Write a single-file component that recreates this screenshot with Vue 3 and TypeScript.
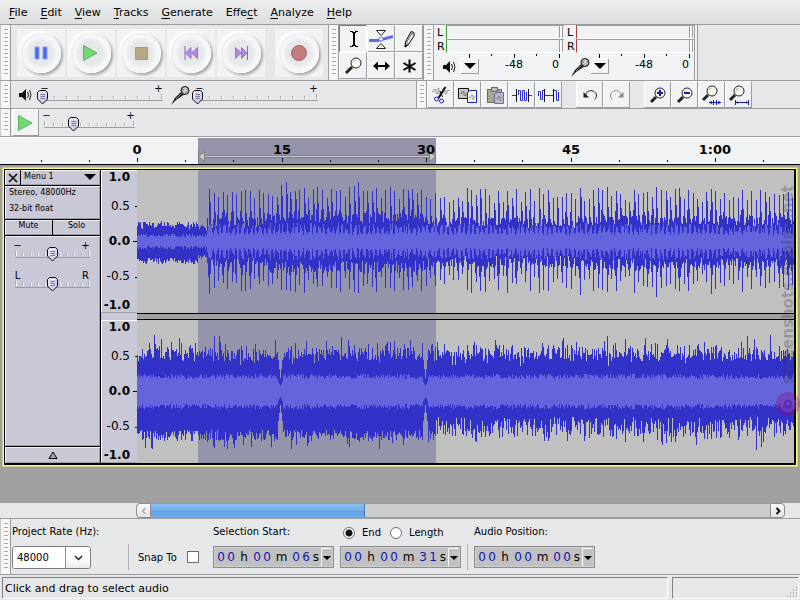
<script setup lang="ts">
import { computed, defineComponent, h, onBeforeUnmount, onMounted, ref } from 'vue'

interface Shape {
  d: string
  fill?: string
  stroke?: string
  w?: number
}

interface Tool {
  name: string
  shapes: Shape[]
}

const Glyph = defineComponent({
  props: { shapes: { type: Array, required: true }, w: { type: Number, default: 24 }, h: { type: Number, default: 24 } },
  setup(props) {
    return () =>
      h(
        'svg',
        { class: 'glyph', width: props.w, height: props.h, viewBox: `0 0 ${props.w} ${props.h}`, 'aria-hidden': 'true' },
        (props.shapes as Shape[]).map((s) =>
          h('path', { d: s.d, fill: s.fill ?? 'none', stroke: s.stroke ?? 'none', 'stroke-width': s.w ?? 1 }),
        ),
      )
  },
})

const Slider = defineComponent({
  props: {
    label: { type: String, required: true },
    low: { type: String, default: '−' },
    high: { type: String, default: '+' },
    length: { type: Number, required: true },
    start: { type: Number, required: true },
  },
  setup(props) {
    const value = ref(props.start)
    return () => {
      const step = (props.length - 2) / 10
      let ticks = ''
      for (let i = 0; i <= 10; i++) {
        const x = Math.round(i * step) + 1
        ticks += `M${x + 0.5} ${i % 10 === 0 ? 12 : 14}V17`
      }
      return h('label', { class: 'slider', style: { width: props.length + 'px' } }, [
        h('svg', { class: 'slider-scale', width: props.length, height: 26, 'aria-hidden': 'true' }, [
          h('path', { d: ticks, stroke: '#ffffff' }),
          h('path', { d: ticks, stroke: '#a8a8ac', transform: 'translate(-1 0)' }),
          h('path', { d: `M0 18.5H${props.length}`, stroke: '#9c9ca0' }),
        ]),
        h('span', { class: 'slider-end' }, props.low),
        h('span', { class: 'slider-end' }, props.high),
        h('svg', { class: 'slider-thumb', style: { left: value.value + '%' }, width: 11, height: 15, 'aria-hidden': 'true' }, [
          h('path', { d: 'M2.5 .5H8.5L10.5 2.5V9L5.5 14L.5 9V2.5Z', fill: '#d2d2ea', stroke: '#111' }),
          h('path', { d: 'M2 9V2.5H8', stroke: '#fff', fill: 'none' }),
          h('path', { d: 'M3.5 4.5H8M3.5 6.5H8M3.5 8.5H8', stroke: '#7c7ca4' }),
        ]),
        h('input', {
          type: 'range', min: 0, max: 100, value: value.value, 'aria-label': props.label,
          onInput: (e: Event) => { value.value = Number((e.target as HTMLInputElement).value) },
        }),
      ])
    }
  },
})

const menus = [
  ['', 'F', 'ile'], ['', 'E', 'dit'], ['', 'V', 'iew'], ['', 'T', 'racks'],
  ['', 'G', 'enerate'], ['Effe', 'c', 't'], ['', 'A', 'nalyze'], ['', 'H', 'elp'],
]

const playShape: Shape[] = [{ d: 'M4.5 4.5L18 12L4.5 19.5Z', fill: '#73d873', stroke: '#58b658' }]

const transport: Tool[] = [
  { name: 'Pause', shapes: [{ d: 'M6 6H10V18H6ZM14 6H18V18H14Z', fill: '#4a68f0', stroke: '#86a0ff' }] },
  { name: 'Play', shapes: playShape },
  { name: 'Stop', shapes: [{ d: 'M6.5 6.5H18.5V18.5H6.5Z', fill: '#b8a888', stroke: '#a89a7c' }] },
  {
    name: 'Skip to Start',
    shapes: [{ d: 'M12 6.5V17.5L6.5 12ZM18.5 6.5V17.5L12.5 12Z', fill: '#b48ae0', stroke: '#9a74cc' }, { d: 'M6 5V19', stroke: '#8b66b8' }],
  },
  {
    name: 'Skip to End',
    shapes: [{ d: 'M6.5 6.5V17.5L12 12ZM12.5 6.5V17.5L18 12Z', fill: '#b48ae0', stroke: '#9a74cc' }, { d: 'M18.5 5V19', stroke: '#8b66b8' }],
  },
  { name: 'Record', shapes: [{ d: 'M4.5 12A7.5 7.5 0 1 0 19.5 12A7.5 7.5 0 1 0 4.5 12Z', fill: '#c47c7c', stroke: '#a86262' }] },
]

const lens = (cx: number, cy: number, tail: string): Shape[] => [
  { d: tail, stroke: '#222', w: 3 },
  { d: `M${cx - 5} ${cy}a5 5 0 1 0 10 0a5 5 0 1 0 -10 0Z`, fill: '#fbfbf0', stroke: '#222' },
  { d: `M${cx - 3} ${cy}a3 3 0 0 1 3 -3`, stroke: '#bbb' },
]

const editTools: Tool[] = [
  {
    name: 'Selection Tool',
    shapes: [{ d: 'M13 5V19', stroke: '#000', w: 2 }, { d: 'M9 4.5H12M14 4.5H17M9 19.5H12M14 19.5H17M11 5.5H15M11 18.5H15', stroke: '#000' }],
  },
  {
    name: 'Envelope Tool',
    shapes: [
      { d: 'M0 13.5H9L24 9.5', stroke: '#6a6ae0', w: 3 },
      { d: 'M7.5 3.5H16.5L12 8.5ZM7.5 21.5H16.5L12 16.5Z', fill: '#fff', stroke: '#222' },
      { d: 'M10 12a2 2 0 1 0 4 0a2 2 0 1 0 -4 0Z', fill: '#fff', stroke: '#7a7ae6' },
    ],
  },
  {
    name: 'Draw Tool',
    shapes: [
      { d: 'M14 4.5L17 5.5V9L11 18L8 20L8.5 15Z', fill: '#fff', stroke: '#000' },
      { d: 'M15 6L10 15M8.5 15L11 17', stroke: '#555' },
      { d: 'M8 17L10.5 18L8 20.5Z', fill: '#000' },
      { d: 'M14 4.5L17 6V9L13.5 7Z', fill: '#888' },
    ],
  },
  { name: 'Zoom Tool', shapes: lens(15, 9, 'M11 13L5 19') },
  { name: 'Time Shift Tool', shapes: [{ d: 'M7 12H18', stroke: '#000', w: 2 }, { d: 'M4 12L9 7.5V16.5ZM21 12L16 7.5V16.5Z', fill: '#000' }] },
  { name: 'Multi Tool', shapes: [{ d: 'M12.5 5.5V18.5M6.5 9L18.5 16M18.5 9L6.5 16', stroke: '#000', w: 2 }] },
]

const clipboard: Tool[] = [
  {
    name: 'Cut',
    shapes: [
      { d: 'M3 8.5H5V6.5H7V10.5H9V5.5H10V11.5M14 6.5V10M16 7V10.5H18V7.5H21', stroke: '#999' },
      { d: 'M16.5 4L9.5 15', stroke: '#111', w: 2 },
      { d: 'M11 8L13.5 14', stroke: '#111' },
      { d: 'M5.5 16a2 2 0 1 0 4 0a2 2 0 1 0 -4 0M10.5 18a2 2 0 1 0 4 0a2 2 0 1 0 -4 0', stroke: '#1a1ab4' },
    ],
  },
  {
    name: 'Copy',
    shapes: [
      { d: 'M2.5 5.5H12.5V15.5H2.5Z', fill: '#c8c8c8', stroke: '#111' },
      { d: 'M4 10.5H6V8.5H8V12.5H10V9.5', stroke: '#777' },
      { d: 'M11.5 9.5L14 7.5H20.5V19.5H11.5Z', fill: '#f5f5fa', stroke: '#1a1ab4' },
      { d: 'M13 14.5H15V12.5H17V16.5H18V13', stroke: '#999' },
    ],
  },
  {
    name: 'Paste',
    shapes: [
      { d: 'M4.5 6.5H18.5V19.5H4.5Z', fill: '#aaa68a', stroke: '#6c6a5c' },
      { d: 'M8.5 4.5H14.5V8.5H8.5Z', fill: '#bcbcbc', stroke: '#666' },
      { d: 'M11.5 11.5L14 9.5H20.5V20.5H11.5Z', fill: '#b8b8cc', stroke: '#6c6ca8' },
      { d: 'M13 15.5H15V13.5H17V17.5H18V14', stroke: '#888' },
    ],
  },
  {
    name: 'Trim Outside Selection',
    shapes: [
      { d: 'M2 12.5H6M19 12.5H22', stroke: '#2a2ad0' },
      { d: 'M8.5 12V7.5H10.5V17.5H12.5V7.5H14.5V17.5H16.5V9', stroke: '#2a2ad0' },
      { d: 'M6.5 6V19M18.5 6V19', stroke: '#111' },
    ],
  },
  {
    name: 'Silence Selection',
    shapes: [
      { d: 'M1.5 13V8.5H3.5V16.5H5.5V7.5H7M17 7.5H19.5V17.5H21.5V9', stroke: '#2a2ad0' },
      { d: 'M8 12.5H16', stroke: '#2a2ad0' },
      { d: 'M7.5 6V19M16.5 6V19', stroke: '#111' },
    ],
  },
]

const history: Tool[] = [
  { name: 'Undo', shapes: [{ d: 'M7.5 12.5A5.5 5 0 1 1 16.5 16.5', stroke: '#222' }, { d: 'M5.5 9V14.5H11Z', fill: '#222' }] },
  { name: 'Redo', shapes: [{ d: 'M16.5 12.5A5.5 5 0 1 0 7.5 16.5', stroke: '#888' }, { d: 'M18.5 9V14.5H13Z', fill: '#888' }] },
]

const zooms: Tool[] = [
  { name: 'Zoom In', shapes: [...lens(14, 10, 'M10 14L5 19'), { d: 'M11 10H17M14 7V13', stroke: '#1a1aa8', w: 2 }] },
  { name: 'Zoom Out', shapes: [...lens(14, 10, 'M10 14L5 19'), { d: 'M11 10H17', stroke: '#1a1aa8', w: 2 }] },
  {
    name: 'Fit Selection',
    shapes: [...lens(12, 8, 'M8 12L3 17'), { d: 'M9 19.5H21M13.5 17V22M16.5 17V22', stroke: '#1a1aa8' }, { d: 'M10.5 17.5L13 19.5L10.5 21.5ZM19.5 17.5L17 19.5L19.5 21.5Z', fill: '#1a1aa8' }],
  },
  {
    name: 'Fit Project',
    shapes: [...lens(12, 8, 'M8 12L3 17'), { d: 'M9 19.5H21M8.5 17V22M21.5 17V22', stroke: '#1a1aa8' }, { d: 'M9 19.5L11 18V21ZM21 19.5L19 18V21Z', fill: '#1a1aa8' }],
  },
]

const speaker: Shape[] = [
  { d: 'M1 6H4L8 2V14L4 10H1Z', fill: '#111' },
  { d: 'M9.5 5Q11.5 8 9.5 11M11.5 3Q14.5 8 11.5 13', stroke: '#222' },
]
const mic: Shape[] = [
  { d: 'M12 6L15 9L6 15L1 20L5 13Z', fill: '#111' },
  { d: 'M12 8L6 14', stroke: '#888' },
  { d: 'M11 5.5a4 4 0 1 0 8 0a4 4 0 1 0 -8 0Z', fill: '#9a9a9a', stroke: '#111' },
  { d: 'M13 3L18 7M13 7L17 3M15 2V9', stroke: '#ddd' },
]

const meters = [
  { name: 'Playback', kind: 'out', shapes: speaker, w: 16, hgt: 16 },
  { name: 'Recording', kind: 'in', shapes: mic, w: 20, hgt: 20 },
]
const meterTicks = Array.from({ length: 6 }, (_, i) => i).slice(1)
  .map((i) => `M${Math.round(i * 22.6) + 0.5} 0V${i % 2 ? 4 : 2}`).join('')

/* Time ruler: 9.63 px per second, zero at the left edge of the waveform. */
const origin = 137
const pxPerFive = 48.17
const viewWidth = ref(window.innerWidth)
const onResize = () => { viewWidth.value = window.innerWidth }
onMounted(() => window.addEventListener('resize', onResize))
onBeforeUnmount(() => window.removeEventListener('resize', onResize))

const marks = computed(() => {
  const list: { x: number; label: string }[] = []
  for (let i = -2; origin + i * pxPerFive < viewWidth.value - 20; i++) {
    const s = i * 5
    const label = s < 60 ? String(s) : `${Math.floor(s / 60)}:${String(s % 60).padStart(2, '0')}`
    list.push({ x: Math.round(origin + i * pxPerFive), label: i >= 0 && i % 3 === 0 ? label : '' })
  }
  return list
})
const labelled = computed(() => marks.value.filter((m) => m.label))
const markPath = computed(() => marks.value.map((m) => `M${m.x + 0.5} ${m.label ? 20 : 22}V24`).join(''))

const levels = ['1.0', '0.5', '0.0', '-0.5', '-1.0']

/* Waveform columns, one pixel wide. */
let seed = 20113
function rnd(): number {
  seed = (seed * 1103515245 + 12345) % 2147483648
  return seed / 2147483648
}

const beatsA = [52, 48, 44, 49, 46, 49, 47, 50, 51, 50, 43, 51, 48, 47, 45, 44, 56, 59, 49, 50, 51, 53, 43, 52, 54, 51, 43, 52, 50, 51, 44, 54, 55, 59, 50, 50, 50, 53, 43, 51, 54, 50, 42, 52, 51, 52, 48, 51, 44, 42]
const beatsB = [51, 54, 45, 50, 47, 41, 39, 51, 47, 48, 49, 44, 54, 51, 50, 44, 52, 53, 42, 51, 48, 42, 39, 49, 52, 50, 42, 48, 41, 44, 43, 51, 41, 50, 41, 51, 49, 44, 47, 46, 47, 49, 43]
const columns = 1800
const mid = 71

function beatAt(i: number): number {
  if (i < beatsA.length) return beatsA[i]
  if (i >= 87 && i - 87 < beatsB.length) return beatsB[i - 87]
  return 38 + rnd() * 16
}

function leftChannel() {
  const up: number[] = []
  const down: number[] = []
  const inner: number[] = []
  for (let x = 0; x < columns; x++) {
    if (x < 70) {
      const fade = x > 60 ? 0.8 : 1
      up.push((12 + rnd() * 8) * fade)
      down.push((17 + rnd() * 6) * fade)
      inner.push(4 + rnd() * 3)
      continue
    }
    const phase = ((x - 72) % 4.52) / 4.52
    const swell = x > 130 && x < 290 ? 5 : x > 440 ? 2 : 0
    up.push(13 + swell + rnd() * 11)
    down.push(15 + swell + rnd() * 12)
    inner.push(phase > 0.6 ? 6 + rnd() * 3 : 9 + rnd() * 9)
  }
  for (let i = 0; 72 + i * 4.52 < columns - 2; i++) {
    const x = Math.round(72 + i * 4.52)
    const a = beatAt(i)
    up[x] = a
    down[x] = a * (0.82 + rnd() * 0.22)
    up[x + 1] = Math.max(up[x + 1], a * (0.4 + rnd() * 0.45))
    down[x + 1] = Math.max(down[x + 1], a * (0.35 + rnd() * 0.35))
    if (rnd() > 0.7) up[x - 1] = Math.max(up[x - 1], a * 0.6)
    if (rnd() > 0.6) down[x - 1] = Math.max(down[x - 1], a * 0.7)
  }
  return { up, down, inner }
}

function rightChannel() {
  const up: number[] = []
  const down: number[] = []
  const inner: number[] = []
  for (let x = 0; x < columns; x++) {
    const late = x > 297
    let u = 30 + rnd() * 14
    let d = late ? 26 + rnd() * 20 : 39 + rnd() * 11
    if (rnd() > 0.9) u += 9
    if (rnd() > 0.92) d += 9
    if (rnd() > 0.93) u -= 6
    const beat = Math.abs((x - 72) % 4.52) < 1
    if (beat) { u += 4; if (late) d += 6 }
    let n = 12 + rnd() * 5
    const gap = Math.min(Math.abs(x - 143), Math.abs(x - 288))
    if (gap < 3) {
      u = 13 + gap * 9
      d = 14 + gap * 8
      n = 5 + gap * 2
    }
    up.push(u)
    down.push(d)
    inner.push(n)
  }
  return { up, down, inner }
}

function columnsPath(up: number[], down: number[]): string {
  return up.map((u, x) => `M${x + 0.5} ${Math.round(mid - u)}V${Math.round(mid + down[x])}`).join('')
}

const channels = [leftChannel(), rightChannel()].map((c, i) => ({
  name: i === 0 ? 'Left channel' : 'Right channel',
  peak: columnsPath(c.up, c.down),
  rms: columnsPath(c.inner, c.inner.map((v) => v + 1)),
}))

const rate = ref('48000')
const snap = ref(false)
const endMode = ref('end')
const startTime = ['00', 'h', '00', 'm', '06', 's']
const endTime = ['00', 'h', '00', 'm', '31', 's']
const position = ['00', 'h', '00', 'm', '00', 's']
</script>

<template>
  <div class="window">
    <nav class="menubar" aria-label="Main menu">
      <button v-for="m in menus" :key="m.join('')" type="button">{{ m[0] }}<u>{{ m[1] }}</u>{{ m[2] }}</button>
    </nav>

    <div class="dock row-tall">
      <span class="grip"></span>
      <div class="transport">
        <button v-for="t in transport" :key="t.name" type="button" :aria-label="t.name" :class="{ record: t.name === 'Record' }">
          <span class="dome"><Glyph :shapes="t.shapes" /></span>
        </button>
      </div>
      <span class="grip edged"></span>
      <div class="tools">
        <button v-for="(t, i) in editTools" :key="t.name" type="button" class="tile" :class="{ pressed: i === 0 }" :aria-label="t.name">
          <Glyph :shapes="t.shapes" />
        </button>
      </div>
      <span class="grip edged"></span>
      <div class="meters">
        <section v-for="m in meters" :key="m.name" class="meter" :class="m.kind" :aria-label="m.name + ' level'">
          <span class="side">L</span><span class="bar"></span>
          <span class="side">R</span><span class="bar"></span>
          <div class="meter-foot">
            <Glyph :shapes="m.shapes" :w="m.w" :h="m.hgt" />
            <button type="button" class="drop" :aria-label="m.name + ' options'"><svg width="12" height="6"><path d="M0 0H12L6 6Z" /></svg></button>
            <svg class="meter-ticks" width="116" height="4" aria-hidden="true"><path :d="meterTicks" stroke="#000" /></svg>
            <span class="db mid">-48</span>
            <span class="db zero">0</span>
          </div>
        </section>
      </div>
    </div>

    <div class="dock row-short">
      <span class="grip"></span>
      <div class="mixer">
        <Glyph :shapes="speaker" :w="16" :h="16" />
        <Slider label="Output volume" :length="121" :start="0" />
        <Glyph class="mic" :shapes="mic" :w="20" :h="20" />
        <Slider label="Input volume" :length="121" :start="0" />
      </div>
      <span class="grip edged"></span>
      <div class="strip">
        <button v-for="t in clipboard" :key="t.name" type="button" class="tile" :aria-label="t.name"><Glyph :shapes="t.shapes" /></button>
      </div>
      <div class="strip">
        <button v-for="t in history" :key="t.name" type="button" class="tile" :aria-label="t.name"><Glyph :shapes="t.shapes" /></button>
      </div>
      <div class="strip">
        <button v-for="t in zooms" :key="t.name" type="button" class="tile" :aria-label="t.name"><Glyph :shapes="t.shapes" /></button>
      </div>
    </div>

    <div class="dock row-short">
      <span class="grip"></span>
      <button type="button" class="tile speed" aria-label="Play at speed"><Glyph :shapes="playShape" /></button>
      <Slider label="Playback speed" :length="91" :start="32" />
    </div>

    <svg class="timeline" role="img" aria-label="Timeline">
      <rect x="198" y="0" width="238" height="26" fill="#9494aa" />
      <path d="M204 18.500H430" stroke="#808080" stroke-width="3" />
      <path d="M204 18.500H430" stroke="#c8c8c8" />
      <path d="M198.500 18.500L204.500 13.500V23.500ZM435.500 18.500L429.500 13.500V23.500Z" fill="#c8c8c8" stroke="#808080" />
      <path d="M198.500 12V25M435.500 12V25" stroke="#808080" />
      <path :d="markPath" stroke="#000" />
      <text v-for="m in labelled" :key="m.x" :x="m.x" y="16" text-anchor="middle">{{ m.label }}</text>
    </svg>

    <main class="workspace">
      <div class="track">
        <aside class="panel">
          <div class="cell title">
            <button type="button" class="close" aria-label="Close track"><svg width="10" height="10"><path d="M1 1L9 9M9 1L1 9" stroke="#000" stroke-width="1.500" /></svg></button>
            <button type="button" class="name">Menu 1<svg width="12" height="6"><path d="M0 0H12L6 6Z" /></svg></button>
          </div>
          <div class="cell info"><p>Stereo, 48000Hz</p><p>32-bit float</p></div>
          <div class="cell pair"><button type="button">Mute</button><button type="button">Solo</button></div>
          <div class="cell knobs">
            <Slider label="Gain" :length="75" :start="49" />
            <Slider label="Pan" low="L" high="R" :length="75" :start="49" />
          </div>
          <button type="button" class="cell collapse" aria-label="Collapse track"><svg width="10" height="8"><path d="M5 1L9 7.500H1Z" fill="#a0a0c8" stroke="#000" /></svg></button>
        </aside>
        <div class="scales">
          <div v-for="c in channels" :key="c.name" class="scale"><span v-for="l in levels" :key="l">{{ l }}</span></div>
        </div>
        <div class="waves">
          <svg v-for="c in channels" :key="c.name" class="wave" role="img" :aria-label="c.name" shape-rendering="crispEdges">
            <rect x="61" y="0" width="238" height="143" fill="#9494aa" />
            <path :d="c.peak" stroke="#3232c8" />
            <path :d="c.rms" stroke="#6464dc" />
          </svg>
        </div>
      </div>
      <div class="watermark">
        <svg width="24" height="24" viewBox="0 0 24 24" aria-hidden="true">
          <circle cx="12" cy="12" r="12" fill="#a00070" fill-opacity=".3" />
          <path d="M12 4a4 4 0 0 1 5 2a4 4 0 0 1 2 6a4 4 0 0 1-2 6a4 4 0 0 1-5 2a4 4 0 0 1-5-2a4 4 0 0 1-2-6a4 4 0 0 1 2-6a4 4 0 0 1 5-2Z" fill="#6450c8" fill-opacity=".6" />
          <circle cx="12" cy="12" r="3" fill="none" stroke="#5a28b4" stroke-width="2" />
        </svg>
        <span>screenshots.debian.net</span>
      </div>
    </main>

    <div class="scroller">
      <button type="button" class="arrow left" aria-label="Scroll left"><svg width="6" height="8"><path d="M4.500 1L1.500 4L4.500 7" fill="none" stroke="#aaa" stroke-width="1.500" /></svg></button>
      <div class="trough"><div class="thumb"></div></div>
      <button type="button" class="arrow right" aria-label="Scroll right"><svg width="6" height="8"><path d="M1.500 1L4.500 4L1.500 7" fill="none" stroke="#111" stroke-width="2" /></svg></button>
    </div>

    <div class="dock selection">
      <span class="grip"></span>
      <div class="field rate">
        <label class="caption" for="rate">Project Rate (Hz):</label>
        <div class="combo">
          <input id="rate" v-model="rate" type="text" />
          <button type="button" aria-label="Choose rate"><svg width="9" height="6"><path d="M1 1L4.500 4.500L8 1" fill="none" stroke="#222" stroke-width="1.500" /></svg></button>
        </div>
      </div>
      <span class="rule"></span>
      <label class="snap">Snap To <input v-model="snap" type="checkbox" /></label>
      <div class="field">
        <span class="caption">Selection Start:</span>
        <div class="time" role="group" aria-label="Selection start">
          <template v-for="(p, i) in startTime" :key="i"><i v-for="(ch, k) in p" :key="k" :class="i % 2 ? 'unit ' + p : 'digit'">{{ ch }}</i></template>
          <button type="button" aria-label="Start format"><svg width="8" height="4"><path d="M0 0H8L4 4Z" /></svg></button>
        </div>
      </div>
      <div class="field end">
        <div class="caption radios">
          <label><input v-model="endMode" type="radio" name="end-mode" value="end" />End</label>
          <label><input v-model="endMode" type="radio" name="end-mode" value="length" />Length</label>
        </div>
        <div class="time" role="group" aria-label="Selection end">
          <template v-for="(p, i) in endTime" :key="i"><i v-for="(ch, k) in p" :key="k" :class="i % 2 ? 'unit ' + p : 'digit'">{{ ch }}</i></template>
          <button type="button" aria-label="End format"><svg width="8" height="4"><path d="M0 0H8L4 4Z" /></svg></button>
        </div>
      </div>
      <span class="rule tight"></span>
      <div class="field">
        <span class="caption">Audio Position:</span>
        <div class="time" role="group" aria-label="Audio position">
          <template v-for="(p, i) in position" :key="i"><i v-for="(ch, k) in p" :key="k" :class="i % 2 ? 'unit ' + p : 'digit'">{{ ch }}</i></template>
          <button type="button" aria-label="Position format"><svg width="8" height="4"><path d="M0 0H8L4 4Z" /></svg></button>
        </div>
      </div>
    </div>

    <footer class="status">
      <p>Click and drag to select audio</p>
      <p class="size">
        <svg width="12" height="12" aria-hidden="true"><path d="M10 1h1M7 4h1M10 4h1M4 7h1M7 7h1M10 7h1M1 10h1M4 10h1M7 10h1M10 10h1" stroke="#888" /></svg>
      </p>
    </footer>
  </div>
</template>

<style>
body {
  margin: 0;
  background: #e6e7e9;
}
.glyph {
  display: block;
  flex: none;
}
.slider {
  position: relative;
  display: flex;
  box-sizing: border-box;
  justify-content: space-between;
  flex: none;
  height: 26px;
  padding-right: 2px;
}
.slider-scale,
.slider-thumb,
.slider input {
  position: absolute;
  top: 0;
  left: 0;
}
.slider-thumb {
  top: 8px;
  margin-left: -5px;
}
.slider input {
  width: 100%;
  height: 100%;
  margin: 0;
  opacity: 0;
}
.slider-end {
  position: relative;
  display: flex;
  justify-content: center;
  width: 5px;
  font-size: 10px;
  line-height: 14px;
}
</style>

<style scoped>
.window {
  display: flex;
  flex-direction: column;
  min-height: 100vh;
  overflow: hidden;
  background: #e6e7e9;
  color: #000;
  font-family: "DejaVu Sans", sans-serif;
  font-size: 10px;
}
button {
  margin: 0;
  padding: 0;
  border: 0;
  background: none;
  color: inherit;
  font: inherit;
}
p {
  margin: 0;
}
.menubar {
  display: flex;
  gap: 13px;
  height: 24px;
  padding-left: 9px;
  border-bottom: 1px solid #9c9c9e;
  background: linear-gradient(#eceded, #dcdddf);
}
.menubar button {
  font-size: 11px;
}
.menubar u {
  text-underline-offset: 2px;
}
.dock {
  display: flex;
  flex: none;
  border-bottom: 1px solid #9c9c9e;
}
.row-tall {
  height: 55px;
}
.row-short {
  height: 27px;
}
.grip {
  flex: none;
  box-sizing: border-box;
  width: 11px;
  padding: 4px 2px 3px 3px;
  border-right: 1px solid #9c9c9e;
  border-left: 1px solid #c8c8ca;
  background: repeating-linear-gradient(#a8a8aa 0 1px, #fafafa 1px 4px) content-box, #f4f5f6;
}
.transport {
  display: flex;
  align-items: center;
  flex: none;
  gap: 2px;
  width: 311px;
  padding-left: 6px;
}
.transport button {
  display: grid;
  place-items: center;
  width: 48px;
  height: 48px;
  background: #f1f2f4;
}
.transport .record {
  margin-left: 8px;
}
.dome {
  display: grid;
  place-items: center;
  width: 40px;
  height: 40px;
  border-radius: 50%;
  background: radial-gradient(circle, #e6e7ea 0 11px, #eeeff1 14px, #f7f8fa 17px, #ebecee 20px);
  box-shadow: 2px 2px 3px #a2a3a6, -2px -2px 3px #ffffff, inset -1px -1px 2px #ffffff;
}
.edged {
  border-left-color: #9c9c9e;
}
.tools {
  display: grid;
  grid-template-columns: repeat(3, 28px);
  grid-template-rows: 27px 27px;
  flex: none;
}
.tile {
  display: grid;
  place-items: center;
  border-top: 1px solid #fff;
  border-left: 1px solid #fff;
  border-right: 1px solid #9c9c9e;
  border-bottom: 1px solid #9c9c9e;
  background: #f1f2f4;
}
.tile.pressed {
  border-color: #77777a #fff #fff #77777a;
}
.meters {
  display: flex;
  flex: none;
  width: 260px;
  border-right: 4px double #9c9c9e;
  background: #f1f2f4;
}
.meter {
  display: grid;
  grid-template-columns: 12px 118px;
  grid-template-rows: 14px 14px 27px;
  row-gap: 0;
  width: 130px;
}
.side {
  padding-left: 3px;
  font-size: 11px;
  line-height: 15px;
}
.bar {
  box-sizing: border-box;
  height: 14px;
  border-top: 1px solid #9c9c9e;
  border-bottom: 1px solid #fff;
  border-left: 1px solid #3a9a3a;
  background: linear-gradient(90deg, transparent 112px, #9c9c9e 112px 113px, #fff 113px 115px, #9c9c9e 115px 116px, transparent 116px);
}
.in .bar {
  border-left-color: #a83a3a;
}
.meter-foot {
  grid-column: 1 / 3;
  position: relative;
  display: flex;
  align-items: center;
  gap: 3px;
  padding-left: 8px;
}
.in .meter-foot {
  gap: 1px;
  padding-left: 6px;
}
.drop {
  display: grid;
  place-items: center;
  width: 18px;
  height: 15px;
  border-right: 1px solid #9c9c9e;
  border-bottom: 1px solid #9c9c9e;
  background: #f4f5f7;
  box-shadow: -1px -1px 0 #fff;
}
.meter-ticks {
  position: absolute;
  top: 1px;
  left: 12px;
}
.db {
  position: absolute;
  top: 5px;
  font-size: 11px;
  line-height: 14px;
}
.db.mid {
  left: 71px;
}
.db.zero {
  left: 118px;
}
.mixer {
  display: flex;
  align-items: center;
  flex: 0 0 398px;
  gap: 8px;
  padding-left: 7px;
}
.mixer .mic {
  margin: 0 -1px;
}
.strip {
  display: flex;
  flex: none;
  margin-right: 14px;
}
.strip .tile,
.speed {
  box-sizing: border-box;
  width: 27px;
  height: 27px;
}
.speed {
  flex: none;
  margin: 0 5px 0 1px;
}
.timeline {
  display: block;
  flex: none;
  width: 100%;
  height: 26px;
  border-top: 1px solid #fff;
  border-bottom: 1px solid #000;
  background: #f1f2f4;
  font-size: 13px;
  font-weight: bold;
}
.workspace {
  position: relative;
  flex: 1 0 auto;
  padding: 3px 2px 35px;
  background: #a0a0a0;
}
.track {
  display: grid;
  grid-template-columns: 96px 36px minmax(0, 1fr);
  border: 1px solid #000;
  border-right-width: 2px;
  border-bottom-width: 2px;
  outline: 1px solid #ffff80;
  box-shadow: 0 0 0 2px #d0d08c;
  margin: 1px 2px 0;
  background: #c8c8d7;
}
.panel {
  display: flex;
  flex-direction: column;
  border-right: 1px solid #000;
  font-size: 8px;
}
.cell {
  flex: none;
  border-bottom: 1px solid #000;
  box-shadow: inset 1px 1px 0 #f2f2f8, inset -1px -1px 0 #a0a0aa;
}
.title {
  display: flex;
  height: 15px;
}
.close {
  display: grid;
  place-items: center;
  width: 16px;
  border-right: 1px solid #000;
}
.name {
  display: flex;
  flex: 1;
  align-items: center;
  justify-content: space-between;
  padding: 0 4px 2px 3px;
}
.info {
  height: 33px;
  padding-left: 4px;
  line-height: 16px;
}
.info p {
  height: 16px;
  line-height: 14px;
}
.pair {
  display: flex;
  height: 15px;
}
.pair button {
  flex: 1;
  padding-bottom: 3px;
  line-height: 12px;
}
.pair button + button {
  border-left: 1px solid #000;
}
.knobs {
  flex: 1;
  display: flex;
  flex-direction: column;
  align-items: center;
  gap: 4px;
  padding-top: 3px;
}
.collapse {
  display: grid;
  place-items: center;
  height: 16px;
  border-bottom: 0;
}
.scales {
  display: grid;
  grid-template-rows: 143px 143px;
  row-gap: 7px;
}
.scale {
  display: grid;
  grid-template-rows: 15px 43px 27px 43px 14px;
  align-items: center;
  border-bottom: 1px solid #a0a0a0;
  box-shadow: inset 1px 1px 0 #fff;
  font-size: 12px;
  line-height: 15px;
  text-align: right;
  background:
    linear-gradient(#000, #000) 100% 36px / 2px 1px no-repeat,
    linear-gradient(#000, #000) 100% 71px / 4px 1px no-repeat,
    linear-gradient(#000, #000) 100% 107px / 2px 1px no-repeat;
}
.scale span {
  padding-right: 7px;
}
.scale span:nth-child(odd) {
  font-weight: bold;
}
.waves {
  display: grid;
  grid-template-rows: 144px 144px;
  row-gap: 5px;
  background: #a0a0a0;
}
.wave {
  display: block;
  width: 100%;
  height: 143px;
  background: #c0c0c0;
}
.waves .wave:first-child {
  border-bottom: 1px solid #000;
}
.waves .wave:last-child {
  border-top: 1px solid #000;
}
.watermark {
  position: absolute;
  top: 20px;
  right: 0;
  display: flex;
  flex-direction: column-reverse;
  align-items: center;
  gap: 8px;
  width: 24px;
  color: rgba(50, 50, 60, 0.3);
  font-size: 15px;
  font-weight: bold;
  line-height: 20px;
}
.watermark span {
  writing-mode: vertical-rl;
  transform: rotate(180deg);
}
.scroller {
  display: flex;
  flex: none;
  height: 15px;
  padding: 0 15px 0 136px;
}
.arrow {
  display: grid;
  place-items: center;
  box-sizing: border-box;
  width: 15px;
  border: 1px solid #8c8c90;
  background: linear-gradient(#fafafa, #e2e3e5);
}
.arrow.left {
  border-radius: 4px 0 0 4px;
}
.arrow.right {
  border-radius: 0 4px 4px 0;
}
.trough {
  flex: 1;
  border-top: 1px solid #9c9c9e;
  border-bottom: 1px solid #9c9c9e;
  background: #cccdcf;
}
.thumb {
  box-sizing: border-box;
  width: 34.5%;
  height: 13px;
  border-right: 1px solid #3c78b4;
  background: linear-gradient(#88bdf0, #74aeea 50%, #60a0e2 51%, #6cacec);
}
.selection {
  height: 55px;
  border-top: 1px solid #9c9c9e;
}
.field {
  display: flex;
  flex-direction: column;
  flex: none;
}
.caption {
  height: 27px;
  line-height: 26px;
}
.rate {
  width: 116px;
  padding-left: 1px;
}
.combo {
  display: flex;
  box-sizing: border-box;
  width: 79px;
  height: 23px;
  border: 1px solid #7c7c80;
  border-radius: 3px;
  overflow: hidden;
  background: #fff;
}
.combo input {
  box-sizing: border-box;
  width: 53px;
  padding: 0 4px;
  border: 0;
  border-right: 1px solid #8c8c90;
  font: inherit;
}
.combo button {
  display: grid;
  place-items: center;
  flex: 1;
  background: linear-gradient(#fff 50%, #e9eaec);
}
.rule {
  flex: none;
  width: 1px;
  height: 26px;
  margin: 25px 9px 0 0;
  background: #b4b4b8;
}
.rule.tight {
  margin: 25px 6px 0;
}
.snap {
  display: flex;
  align-items: center;
  flex: none;
  gap: 10px;
  width: 75px;
  height: 22px;
  margin-top: 27px;
}
.snap input {
  appearance: none;
  width: 12px;
  height: 12px;
  margin: 0;
  border: 1px solid #6c6c70;
  background: #fff;
  box-sizing: border-box;
}
.snap input:checked {
  background: #4a68f0;
}
.end {
  margin-left: 6px;
}
.radios {
  display: flex;
  gap: 9px;
  padding-left: 3px;
}
.radios label {
  display: flex;
  align-items: center;
  gap: 7px;
}
.radios input {
  appearance: none;
  box-sizing: border-box;
  width: 12px;
  height: 12px;
  margin: 0;
  border: 1px solid #6c6c70;
  border-radius: 50%;
  background: #fff;
}
.radios input:checked {
  background: radial-gradient(circle, #111 0 3px, #fff 4px);
}
.time {
  display: flex;
  align-items: center;
  box-sizing: border-box;
  width: 121px;
  height: 22px;
  padding-left: 2px;
  border: 1px solid #8c8c90;
  background: #c0c0c0;
  box-shadow: inset 0 0 0 1px #d0d0d2;
  font-size: 12px;
}
.time i {
  width: 10px;
  color: #1414b4;
  font-style: normal;
  text-align: center;
}
.time .unit {
  color: #000;
}
.time .h {
  width: 16px;
}
.time .m {
  width: 19px;
}
.time button {
  display: grid;
  place-items: center;
  box-sizing: border-box;
  width: 10px;
  height: 18px;
  border-top: 1px solid #fff;
  border-left: 1px solid #fff;
}
.status {
  display: grid;
  grid-template-columns: minmax(0, 1fr) 127px;
  gap: 4px;
  flex: none;
  padding: 2px 1px 1px 2px;
  font-size: 11px;
}
.status p {
  box-sizing: border-box;
  height: 22px;
  padding-left: 2px;
  border: 1px solid #fff;
  border-top-color: #808084;
  border-left-color: #808084;
  line-height: 21px;
}
.status .size {
  display: flex;
  align-items: flex-end;
  justify-content: flex-end;
}
</style>
